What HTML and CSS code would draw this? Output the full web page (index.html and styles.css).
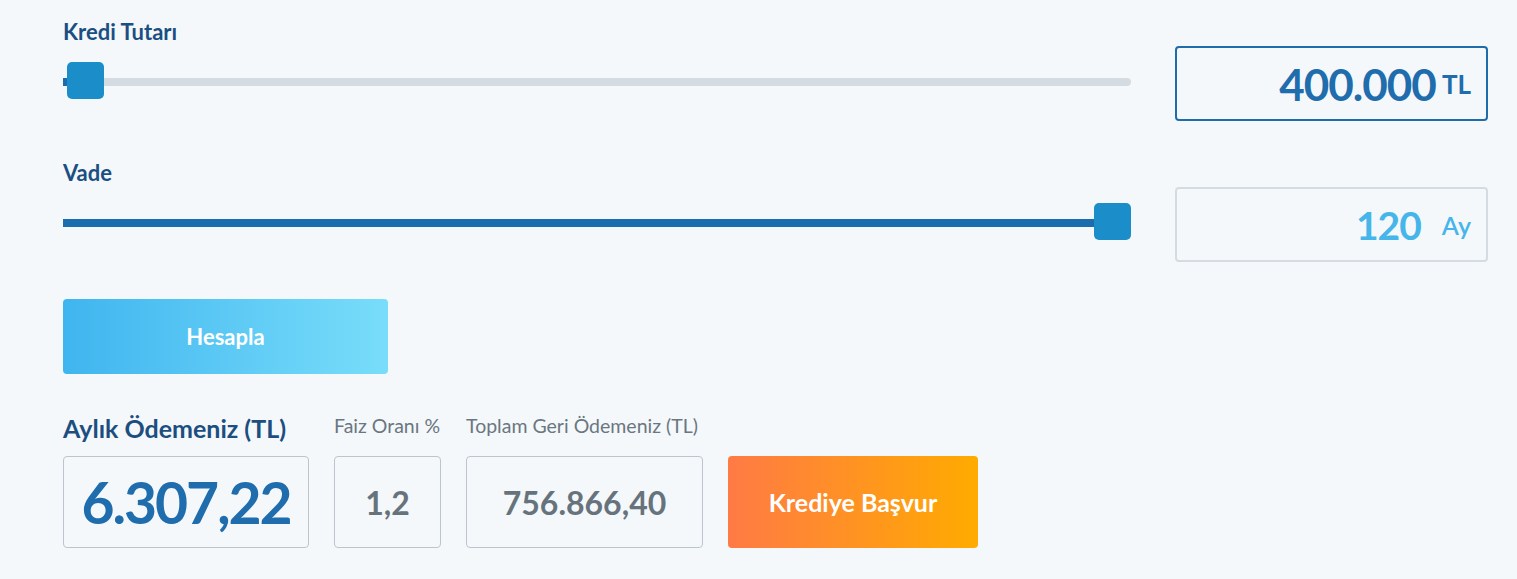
FILE: index.html
```html
<!DOCTYPE html>
<html lang="tr">
<head>
  <meta charset="utf-8">
  <meta name="viewport" content="width=device-width, initial-scale=1.0">
  <title>Kredi Hesaplama</title>
  <link rel="stylesheet" href="styles.css">
</head>
<body>
  <main class="calculator">
    <div class="calc-row">
      <div class="calc-left">
        <label class="calc-label">Kredi Tutarı</label>
        <div class="slider-wrap">
          <div class="slider">
            <div class="slider-track"></div>
            <div class="slider-fill" style="width: 7px"></div>
            <div class="slider-thumb" style="left: 4px"></div>
          </div>
        </div>
      </div>
      <div class="value-box active">
        <span class="value-num">400.000</span>
        <span class="value-unit">TL</span>
      </div>
    </div>

    <div class="calc-row">
      <div class="calc-left">
        <label class="calc-label">Vade</label>
        <div class="slider-wrap">
          <div class="slider">
            <div class="slider-track"></div>
            <div class="slider-fill" style="width: 100%"></div>
            <div class="slider-thumb" style="left: calc(100% - 37px)"></div>
          </div>
        </div>
      </div>
      <div class="value-box">
        <span class="value-num light">120</span>
        <span class="value-unit light wide">Ay</span>
      </div>
    </div>

    <button class="btn btn-calc" type="button">Hesapla</button>

    <section class="results">
      <div class="result-label main">Aylık Ödemeniz (TL)</div>
      <div class="result-label">Faiz Oranı %</div>
      <div class="result-label">Toplam Geri Ödemeniz (TL)</div>
      <div class="result-label"></div>

      <div class="result-box big">6.307,22</div>
      <div class="result-box">1,2</div>
      <div class="result-box">756.866,40</div>
      <button class="btn btn-apply" type="button">Krediye Başvur</button>
    </section>
  </main>
</body>
</html>
```

FILE: styles.css
```css
body {
  font-family: 'Source Sans Pro', 'Lato', 'Open Sans', sans-serif;
  margin: 0;
  padding: 0;
  background-color: #f4f8fb;
}

.calculator {
  padding: 20px 29px 0 63px;
}

.calc-row {
  display: flex;
  align-items: flex-end;
  gap: 44px;
  margin-bottom: 40px;
}

.calc-left {
  flex: 1;
}

.calc-label {
  display: block;
  font-size: 22px;
  line-height: 24px;
  font-weight: 700;
  color: #1b4f82;
  margin-bottom: 2px;
}

.slider-wrap {
  height: 75px;
  box-sizing: border-box;
  padding-bottom: 3px;
  display: flex;
  align-items: center;
}

.slider {
  position: relative;
  width: 100%;
  height: 8px;
}

.slider-track {
  height: 8px;
  border-radius: 4px;
  background-color: #d4dce1;
}

.slider-fill {
  position: absolute;
  top: 0;
  left: 0;
  height: 8px;
  background-color: #1b6db0;
}

.slider-thumb {
  position: absolute;
  top: -16px;
  width: 37px;
  height: 37px;
  border-radius: 5px;
  background-color: #1b8dc8;
}

.value-box {
  width: 313px;
  height: 75px;
  box-sizing: border-box;
  border: 2px solid #d4dce1;
  border-radius: 4px;
  display: flex;
  align-items: center;
  justify-content: flex-end;
  padding-right: 15px;
}

.value-box.active {
  border-color: #1f6cab;
}

.value-num {
  font-size: 44px;
  font-weight: 700;
  color: #1f6dad;
  letter-spacing: -1px;
}

.value-unit {
  font-size: 26px;
  font-weight: 700;
  color: #1f6dad;
  margin-left: 6px;
}

.value-num.light {
  font-size: 39px;
  color: #45b5ea;
}

.value-unit.light {
  font-size: 25px;
  color: #45b5ea;
  font-weight: 600;
}

.value-unit.wide {
  margin-left: 21px;
}

.btn {
  border: none;
  border-radius: 4px;
  color: #fff;
  font-family: inherit;
  font-weight: 700;
  cursor: pointer;
}

.btn-calc {
  display: block;
  width: 325px;
  height: 75px;
  margin-top: -3px;
  font-size: 22px;
  background: linear-gradient(to right, #3fb5ef, #79ddfa);
}

.results {
  display: grid;
  grid-template-columns: 246px 107px 237px 250px;
  column-gap: 25px;
  row-gap: 12px;
  align-items: end;
  margin-top: 38px;
}

.result-label {
  font-size: 19.5px;
  line-height: 28px;
  padding-bottom: 4px;
  color: #6a7680;
  white-space: nowrap;
}

.result-label.main {
  font-size: 25px;
  line-height: 32px;
  padding-bottom: 0;
  font-weight: 700;
  color: #1c4e80;
}

.result-box {
  align-self: stretch;
  height: 92px;
  box-sizing: border-box;
  border: 1px solid #bcc5cc;
  border-radius: 4px;
  display: flex;
  align-items: center;
  justify-content: center;
  font-size: 32px;
  font-weight: 700;
  color: #67737c;
}

.result-box.big {
  font-size: 57px;
  color: #1f6dad;
  letter-spacing: -2px;
}

.btn-apply {
  align-self: stretch;
  height: 92px;
  font-size: 25px;
  background: linear-gradient(to right, #ff7a45, #ffab00);
}
```
